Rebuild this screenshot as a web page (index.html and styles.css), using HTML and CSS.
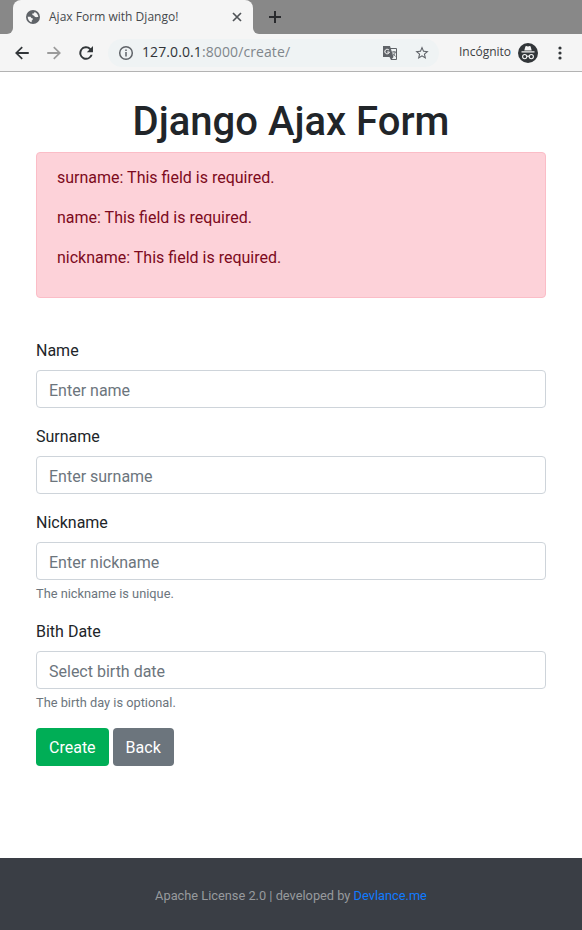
FILE: index.html
```html
<!DOCTYPE html>
<html lang="es">
<head>
<meta charset="utf-8">
<title>Ajax Form with Django!</title>
<link rel="stylesheet" href="styles.css">
</head>
<body>
<header class="browser">
  <div class="tabs">
    <div class="tab-edge"></div>
    <div class="tab">
      <svg class="globe" viewBox="0 0 16 16"><circle class="ball" cx="8" cy="8" r="7"/><path class="land" d="M2.700 7.700h3c.2 1.200 1 1.600 2 1.600.5 1.400-.4 1.900-1 2.200v1.700C4.500 12.800 2.700 10.600 2.700 7.700zM9.500 2.900c-.3 1.500-1.400 1.600-2.200 1.700-.3 1.500.6 2 1.700 2 .5 1.100 1.200 1.700 3.200 1.500l1.100-.1c0-2.400-1.500-4.300-3.800-5.100z"/></svg>
      <span class="tab-title">Ajax Form with Django!</span>
      <svg class="close" viewBox="0 0 10 10"><path d="M1 1l8 8M9 1L1 9"/></svg>
    </div>
    <div class="tab-rest"><svg class="plus" viewBox="0 0 12 12"><path d="M6 0v12M0 6h12"/></svg></div>
  </div>
  <div class="toolbar">
    <svg class="nav" viewBox="0 0 24 24"><path d="M21 10.800H7.200l5.900-5.900L11.500 3.200 2.700 12l8.800 8.800 1.600-1.700-5.900-5.900H21z"/></svg>
    <svg class="nav muted" viewBox="0 0 24 24"><path d="M3 10.800h13.800l-5.900-5.900 1.600-1.700 8.800 8.800-8.800 8.800-1.600-1.700 5.900-5.900H3z"/></svg>
    <svg class="nav" viewBox="0 0 24 24"><path d="M18.400 5.600A9 9 0 1 0 20.800 14.300h-2.700A6.400 6.400 0 1 1 12 5.600c1.800 0 3.300.7 4.500 1.900L13 11h8.300V2.700z"/></svg>
    <div class="address">
      <svg class="info" viewBox="0 0 16 16"><circle cx="8" cy="8" r="6.300"/><path d="M8 7v4.500M8 4.500v1.500"/></svg>
      <span class="url"><b>127.0.0.1</b>:8000/create/</span>
      <svg class="translate" viewBox="0 0 16 16"><path class="sheet" d="M7 3.500h7.500v11H9"/><path class="page" d="M1 1h7l3.500 11H1z"/><path class="fold" d="M7.500 12h4l-2.500 3z"/><path class="g" d="M7 5.200A2.300 2.300 0 1 0 7.400 7H5.200"/><path class="glyph" d="M10 7h4M12 6v1M13.300 7c-.5 2-1.500 3-2.300 3.600M11 8.500l2.500 3"/></svg>
      <svg class="star" viewBox="0 0 24 24"><path d="M22 9.240l-7.190-.620L12 2 9.190 8.630 2 9.240l5.460 4.730L5.820 21 12 17.270 18.180 21l-1.630-7.030zM12 15.400l-3.760 2.270 1-4.280-3.320-2.880 4.380-.380L12 6.100l1.710 4.040 4.380.380-3.320 2.880 1 4.280z"/></svg>
    </div>
    <span class="incognito">Incógnito</span>
    <svg class="spy" viewBox="0 0 20 20"><circle class="disc" cx="10" cy="10" r="10"/><path class="hat" d="M6.300 7.400L7.400 3.500q.2-.5.800-.4l1.800.5 1.800-.5q.6-.1.800.4l1.100 3.900zM3.500 8.300h13v1.200h-13z"/><g class="glasses"><circle cx="6.700" cy="13.600" r="2.100"/><circle cx="13.300" cy="13.600" r="2.100"/><path d="M8.800 13.400q1.200-.7 2.400 0"/></g></svg>
    <svg class="dots" viewBox="0 0 4 14"><circle cx="2" cy="2" r="1.600"/><circle cx="2" cy="7" r="1.600"/><circle cx="2" cy="12" r="1.600"/></svg>
  </div>
</header>
<main>
  <h1>Django Ajax Form</h1>
  <div class="alert">
    <p>surname: This field is required.</p>
    <p>name: This field is required.</p>
    <p>nickname: This field is required.</p>
  </div>
  <form>
    <div class="group"><label for="name">Name</label><input id="name" placeholder="Enter name"></div>
    <div class="group"><label for="surname">Surname</label><input id="surname" placeholder="Enter surname"></div>
    <div class="group"><label for="nickname">Nickname</label><input id="nickname" placeholder="Enter nickname"><small>The nickname is unique.</small></div>
    <div class="group"><label for="birth">Bith Date</label><input id="birth" placeholder="Select birth date"><small>The birth day is optional.</small></div>
    <div class="actions"><button class="btn create" type="button">Create</button><button class="btn back" type="button">Back</button></div>
  </form>
</main>
<footer><span>Apache License 2.0 | developed by <a href="#">Devlance.me</a></span></footer>
</body>
</html>
```
FILE: styles.css
```css
* { box-sizing: border-box; }
body {
  margin: 0;
  height: 930px;
  display: flex;
  flex-direction: column;
  overflow: hidden;
  background: #fff;
  color: #212529;
  font: 16px/24px Roboto, sans-serif;
}
svg { display: block; flex: none; }

.browser {
  height: 72px;
  flex: none;
  background: #f5f5f5;
  border-bottom: 1px solid #b3b3b3;
  font-family: "Open Sans", sans-serif;
}
.tabs {
  display: flex;
  height: 34px;
  background: linear-gradient(#888 0 20px, #f5f5f5 20px);
}
.tab-edge {
  width: 13px;
  background: #888;
  border-radius: 0 0 6px 0;
}
.tab {
  width: 240px;
  display: flex;
  align-items: center;
  padding: 0 11px 0 12px;
  background: #f5f5f5;
  border-radius: 8px 8px 0 0;
}
.globe { width: 16px; height: 16px; }
.ball { fill: #5f6368; }
.land { fill: #f5f5f5; }
.tab-title { margin-left: 8px; font-size: 12px; letter-spacing: .02px; color: #45494d; white-space: nowrap; }
.close { width: 10px; height: 10px; margin-left: auto; fill: none; stroke: #505458; stroke-width: 1.7; }
.tab-rest {
  flex: 1;
  padding: 11px 16px;
  background: #888;
  border-radius: 0 0 0 6px;
}
.plus { width: 12px; height: 12px; fill: none; stroke: #292a2d; stroke-width: 2; }

.toolbar { height: 37px; display: flex; align-items: center; padding: 0 14px 0 13px; }
.nav { width: 18px; height: 18px; margin-right: 14px; fill: #323639; }
.muted { fill: #9b9b9b; }
.address {
  width: 331px;
  height: 28px;
  display: flex;
  align-items: center;
  padding: 0 9px 0 10px;
  margin-left: -1px;
  border-radius: 14px;
  background: #eff3f4;
}
.info { width: 16px; height: 16px; fill: none; stroke: #5f6368; stroke-width: 1.5; }
.url { margin: 0 0 2px 8px; font-size: 14px; letter-spacing: .1px; color: #80868b; }
.url b { font-weight: 400; color: #303438; }
.translate { width: 16px; height: 16px; margin-left: auto; }
.sheet { fill: #eff3f4; stroke: #5f6368; }
.page, .fold { fill: #5f6368; }
.g { fill: none; stroke: #fff; }
.glyph { fill: none; stroke: #5f6368; stroke-width: .9; }
.star { width: 16px; height: 16px; margin-left: 16px; fill: #5f6368; }
.incognito { width: 51px; margin: 0 0 2px 20px; font-size: 12px; color: #3c4043; white-space: nowrap; }
.spy { width: 20px; height: 20px; margin-left: 8px; }
.disc { fill: #323639; }
.hat { fill: #f5f5f5; }
.glasses { fill: none; stroke: #f5f5f5; stroke-width: 1.1; }
.dots { width: 4px; height: 14px; margin-left: auto; margin-right: 6px; fill: #323639; }

main { flex: 1; padding: 26px 36px 0; }
h1 {
  margin: 0 0 6px;
  font-size: 40px;
  line-height: 48px;
  font-weight: 500;
  text-align: center;
}
.alert {
  height: 146px;
  padding: 13px 20px 0;
  border: 1px solid #fbbdc7;
  border-radius: 4px;
  background: #fdd2d9;
  color: #7c0a20;
}
.alert p { margin: 0 0 16px; }
form { margin-top: 40px; }
.group { margin-bottom: 16px; }
label { display: block; padding-top: 1px; margin-bottom: 7px; }
input {
  display: block;
  width: 100%;
  height: 38px;
  padding: 7px 12px 5px;
  border: 1px solid #ced4da;
  border-radius: 4px;
  background: #fff;
  font: inherit;
}
input::placeholder { color: #6c757d; opacity: 1; }
small { display: block; margin-top: 4px; line-height: 19px; font-size: 12.8px; color: #6c757d; }
.actions { display: flex; gap: 4px; }
.btn {
  height: 38px;
  padding: 7px 12px 5px;
  border: 1px solid transparent;
  border-radius: 4px;
  font: inherit;
  color: #fff;
}
.create { background: #00ae56; }
.back { background: #6c757d; }
footer {
  height: 72px;
  flex: none;
  display: flex;
  align-items: center;
  justify-content: center;
  padding-top: 4px;
  background: #3a3e45;
  color: #979a9d;
  font-size: 12.8px;
}
footer a { color: #107bff; text-decoration: none; }
```
